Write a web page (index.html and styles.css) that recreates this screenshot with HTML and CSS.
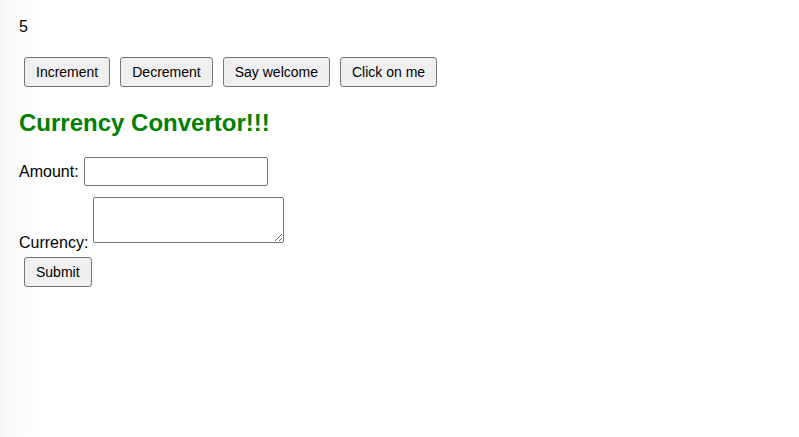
FILE: index.html
```html
<!DOCTYPE html>
<html lang="en">
<head>
<meta charset="utf-8">
<title>Currency Convertor</title>
<link rel="stylesheet" href="styles.css">
</head>
<body>
<div class="app">
  <div class="count">5</div>
  <div class="actions">
    <button class="btn">Increment</button>
    <button class="btn">Decrement</button>
    <button class="btn">Say welcome</button>
    <button class="btn">Click on me</button>
  </div>
  <h2 class="title">Currency Convertor!!!</h2>
  <form class="form">
    <div class="row row-amount">
      <label>Amount:</label> <input class="field" type="text">
    </div>
    <div class="row row-currency">
      <label>Currency:</label> <textarea class="area"></textarea>
    </div>
    <button class="btn" type="button">Submit</button>
  </form>
</div>
</body>
</html>
```
FILE: styles.css
```css
html, body {
  height: 100%;
}
body {
  margin: 0;
  font-family: "Liberation Sans", Arial, sans-serif;
  font-size: 16px;
  color: #000;
  background: linear-gradient(to right, #f5f5f5 0, #fbfbfb 20px, #ffffff 40px);
}
.app {
  padding: 18px 19px 15px;
}
.count {
  line-height: normal;
}
.actions {
  display: flex;
  margin-top: 16px;
}
.btn {
  font-family: "Liberation Sans", Arial, sans-serif;
  font-size: 14px;
  line-height: 16px;
  padding: 6px 11px;
  margin: 5px;
  border: 1px solid #767676;
  border-radius: 3px;
  background: #efefef;
  color: #000;
}
.title {
  margin: 17px 0 20px;
  font-size: 24px;
  font-weight: bold;
  color: #008000;
}
.row-amount {
  margin-bottom: 6px;
}
.field {
  box-sizing: border-box;
  width: 184px;
  height: 29px;
  padding: 6px 6px 5px;
  margin: 0 0 0 1px;
  font-family: "Liberation Sans", Arial, sans-serif;
  font-size: 14px;
  line-height: 16px;
  border: 1px solid #767676;
  border-radius: 2px;
}
.area {
  box-sizing: border-box;
  width: 191px;
  height: 46px;
  margin: 5px 0;
  padding: 2px;
  font-family: "Liberation Sans", Arial, sans-serif;
  font-size: 14px;
  border: 1px solid #767676;
  border-radius: 2px;
}
.form .btn {
  margin-top: 5px;
}
```
